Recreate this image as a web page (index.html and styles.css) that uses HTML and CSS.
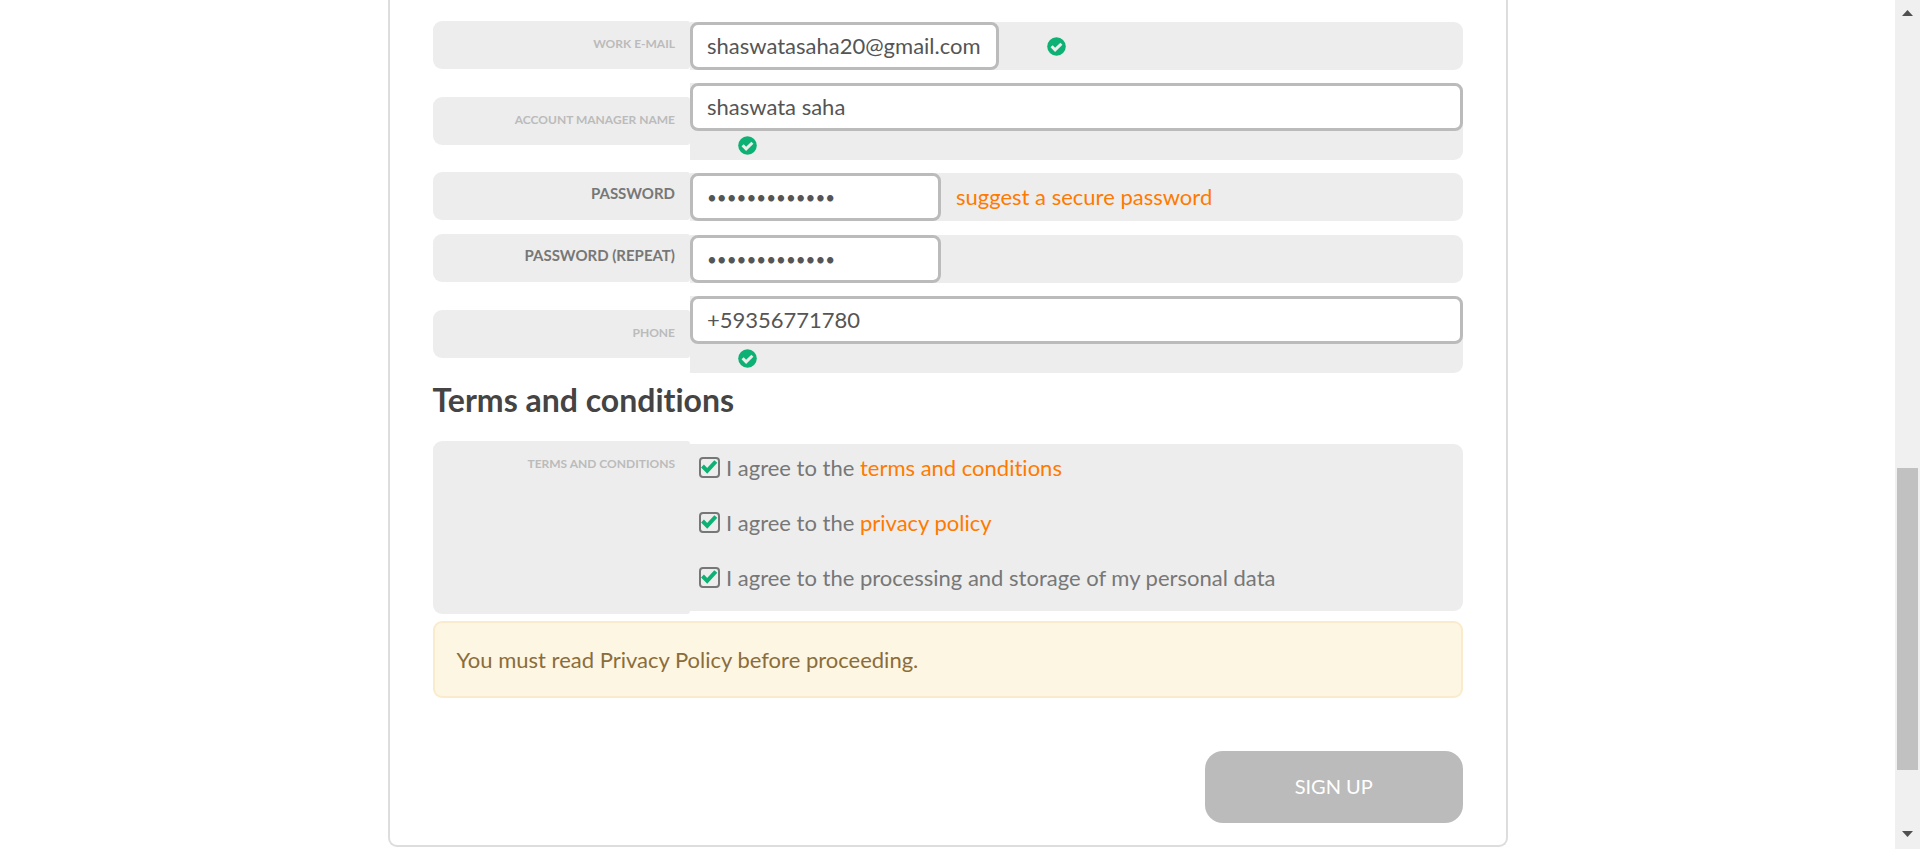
FILE: index.html
```html
<!DOCTYPE html>
<html lang="en">
<head>
<meta charset="utf-8">
<title>Sign up</title>
<link rel="stylesheet" href="styles.css">
</head>
<body>
<svg class="sprite" aria-hidden="true">
  <symbol id="ok" viewBox="0 0 19 19">
    <circle cx="9.500" cy="9.500" r="9.300" fill="#0cb173"/>
    <path d="M4.600 9.300l3.500 3.600 6.300-6.200" fill="none" stroke="#ededed" stroke-width="3"/>
  </symbol>
</svg>
<div class="window">
  <main class="content">
    <form class="card">
      <div class="rows">
        <div class="row">
          <label class="label minor" for="email">Work e-mail</label>
          <div class="field">
            <input class="input medium" id="email" type="text" value="shaswatasaha20@gmail.com">
            <span class="status"><svg class="ok" role="img" aria-label="Valid"><use href="#ok"/></svg></span>
          </div>
        </div>
        <div class="row">
          <label class="label minor" for="manager">Account manager name</label>
          <div class="field stacked">
            <input class="input" id="manager" type="text" value="shaswata saha">
            <span class="status"><svg class="ok" role="img" aria-label="Valid"><use href="#ok"/></svg></span>
          </div>
        </div>
        <div class="row">
          <label class="label" for="password">Password</label>
          <div class="field">
            <input class="input short" id="password" type="password" value="abcdefghijklm">
            <a class="link suggest" href="#">suggest a secure password</a>
          </div>
        </div>
        <div class="row">
          <label class="label" for="repeat">Password (repeat)</label>
          <div class="field">
            <input class="input short" id="repeat" type="password" value="abcdefghijklm">
          </div>
        </div>
        <div class="row">
          <label class="label minor" for="phone">Phone</label>
          <div class="field stacked">
            <input class="input" id="phone" type="text" value="+59356771780">
            <span class="status"><svg class="ok" role="img" aria-label="Valid"><use href="#ok"/></svg></span>
          </div>
        </div>
      </div>

      <h2 class="heading">Terms and conditions</h2>

      <div class="row terms" role="group" aria-labelledby="terms-label">
        <div class="label minor" id="terms-label">Terms and conditions</div>
        <div class="field agreements">
          <label class="agree"><input class="check" type="checkbox" checked><svg class="tick" viewBox="0 0 21 21" aria-hidden="true"><path d="M3.500 9l4.700 4.800 8.600-9.300"/></svg><span>I agree to the <a class="link" href="#">terms and conditions</a></span></label>
          <label class="agree"><input class="check" type="checkbox" checked><svg class="tick" viewBox="0 0 21 21" aria-hidden="true"><path d="M3.500 9l4.700 4.800 8.600-9.300"/></svg><span>I agree to the <a class="link" href="#">privacy policy</a></span></label>
          <label class="agree"><input class="check" type="checkbox" checked><svg class="tick" viewBox="0 0 21 21" aria-hidden="true"><path d="M3.500 9l4.700 4.800 8.600-9.300"/></svg><span>I agree to the processing and storage of my personal data</span></label>
        </div>
      </div>

      <p class="notice">You must read Privacy Policy before proceeding.</p>

      <div class="actions"><button class="submit" type="button">SIGN UP</button></div>
    </form>
  </main>
  <div class="scrollbar" aria-hidden="true">
    <svg class="arrow" viewBox="0 0 25 22"><path d="M7 16h11l-5.500-6z"/></svg>
    <div class="thumb"></div>
    <svg class="arrow" viewBox="0 0 25 22"><path d="M7 4h11l-5.500 6z"/></svg>
  </div>
</div>
</body>
</html>
```
FILE: styles.css
```css
* { box-sizing: border-box; }

body {
  margin: 0;
  background: #fff;
  color: #777;
  font: 22px/28px Lato, "Open Sans", sans-serif;
  font-variant-ligatures: none;
}

.sprite { position: absolute; width: 0; height: 0; }

.window { display: flex; height: 100vh; overflow: hidden; }

.content { flex: 1; min-width: 0; }

.card {
  max-width: 1120px;
  margin: 0 auto;
  padding: 21px 43px 22px;
  border: 2px solid #ddd;
  border-top: 0;
  border-radius: 0 0 9px 9px;
}

.rows { display: grid; gap: 12px; }

.row {
  display: grid;
  grid-template-columns: 1fr 3fr;
  align-items: center;
}

.label {
  height: 48px;
  margin-bottom: 2px;
  padding-right: 15px;
  border-radius: 9px 3px 3px 9px;
  background: #ededed;
  font-size: 15px;
  font-weight: 700;
  line-height: 43px;
  text-align: right;
  text-transform: uppercase;
}

.minor { color: #bbb; font-size: 12px; line-height: 46px; }

.field {
  display: flex;
  align-items: center;
  min-width: 0;
  border-radius: 0 9px 9px 0;
  background: #ededed;
}

.stacked { flex-direction: column; align-items: stretch; }

.input {
  width: 100%;
  height: 48px;
  padding: 0 14px 2px;
  border: 3px solid #bbb;
  border-radius: 8px;
  background: #fff;
  color: #555;
  font: inherit;
}

.medium { width: 40%; }
.short { width: 251px; padding-bottom: 0; font-size: 17px; }

.status { display: flex; align-items: center; height: 29px; padding-left: 48px; }
.ok { width: 19px; height: 19px; }

.link { color: #ff7a00; text-decoration: none; }
.suggest { margin-left: 15px; }

.heading {
  margin: 8px 0 23px;
  color: #444;
  font-size: 32px;
  font-weight: 700;
  line-height: 37px;
}

.terms .label { height: 173px; margin: 0; }

.agreements {
  flex-direction: column;
  align-items: stretch;
  gap: 8px;
  padding: 0 9px 10px;
}

.agree { display: grid; grid-template-columns: 21px 1fr; column-gap: 6px; align-items: center; height: 47px; }

.check {
  grid-area: 1 / 1;
  appearance: none;
  width: 21px;
  height: 21px;
  margin: 0;
  border: 2px solid #777;
  border-radius: 4px;
}

.tick {
  grid-area: 1 / 1;
  width: 21px;
  height: 21px;
  fill: none;
  stroke: #0cb173;
  stroke-width: 4;
}

.notice {
  margin: 7px 0 53px;
  padding: 22px;
  border: 2px solid #faebcc;
  border-radius: 9px;
  background: #fdf6e3;
  color: #8a6d3b;
  line-height: 29px;
}

.actions { display: flex; justify-content: flex-end; }

.submit {
  width: 25%;
  height: 72px;
  padding-bottom: 4px;
  border: 0;
  border-radius: 18px;
  background: #bbb;
  color: #fff;
  font: inherit;
  font-size: 20px;
}

.scrollbar {
  display: grid;
  grid-template-rows: 22px 446fr 302fr 57fr 22px;
  width: 25px;
  background: #f0f0f0;
}

.arrow { width: 25px; height: 22px; fill: #505050; }
.arrow:last-child { grid-row: 5; }
.thumb { grid-row: 3; margin: 0 2px; background: #c1c1c1; }
```
